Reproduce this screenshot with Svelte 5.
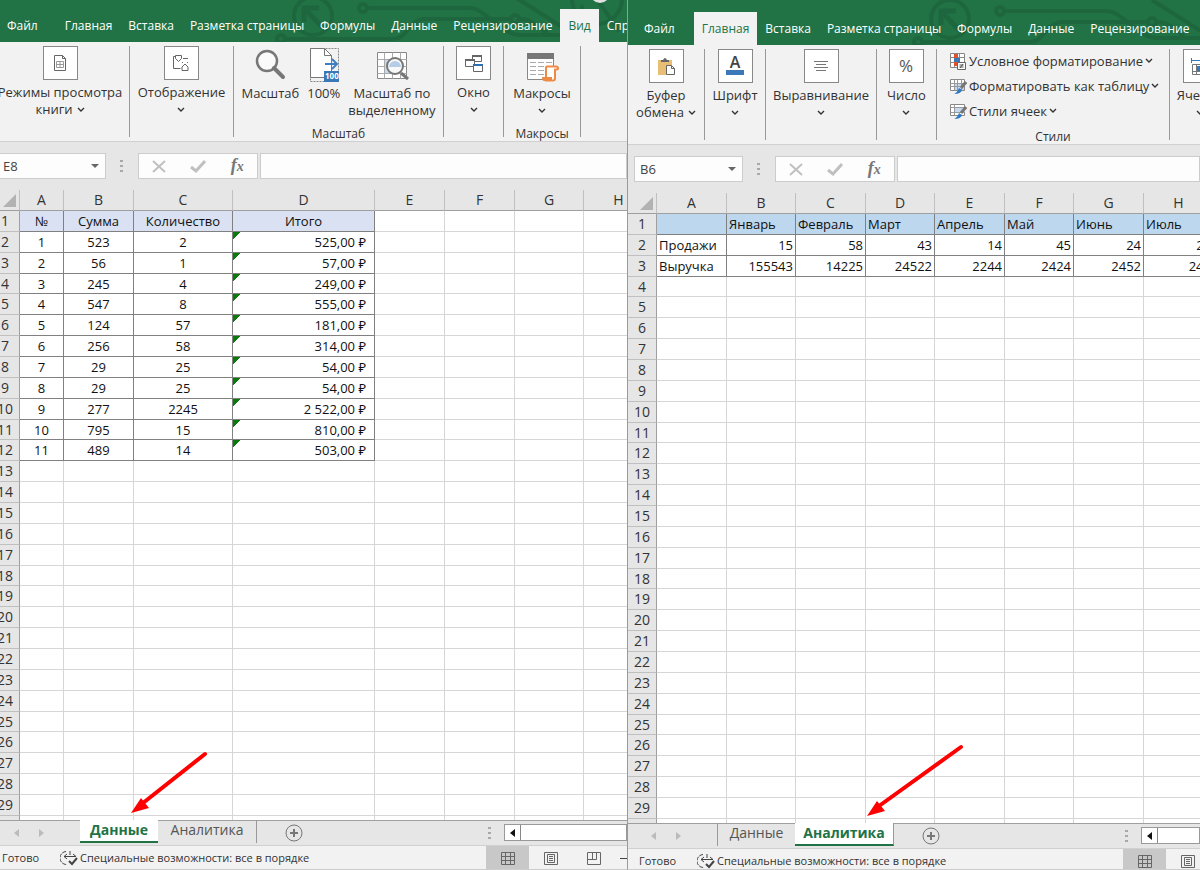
<script lang="ts">
  type Cell = string | number;

  const rowNumbers = Array.from({ length: 29 }, (_, i) => i + 1);

  const dataRows: Cell[][] = [
    ['№', 'Сумма', 'Количество', 'Итого'],
    [1, 523, 2, '525,00 ₽'],
    [2, 56, 1, '57,00 ₽'],
    [3, 245, 4, '249,00 ₽'],
    [4, 547, 8, '555,00 ₽'],
    [5, 124, 57, '181,00 ₽'],
    [6, 256, 58, '314,00 ₽'],
    [7, 29, 25, '54,00 ₽'],
    [8, 29, 25, '54,00 ₽'],
    [9, 277, 2245, '2 522,00 ₽'],
    [10, 795, 15, '810,00 ₽'],
    [11, 489, 14, '503,00 ₽'],
  ];

  const analyticsRows: Cell[][] = [
    ['', 'Январь', 'Февраль', 'Март', 'Апрель', 'Май', 'Июнь', 'Июль'],
    ['Продажи', 15, 58, 43, 14, 45, 24, 25],
    ['Выручка', 155543, 14225, 24522, 2244, 2424, 2452, 245],
  ];

  const books = [
    {
      id: 'data',
      active: 'Вид',
      cell: 'E8',
      sheet: 'Данные',
      rows: dataRows,
      columns: [44, 70, 99, 142, 70, 70, 69, 70],
      arrow: { left: 138, width: 82, height: 68 },
      groups: [
        { width: 139, items: [{ icon: 'views', boxed: true, lines: ['Режимы просмотра', 'книги'], menu: 'inline' }] },
        { width: 104, items: [{ icon: 'show', boxed: true, lines: ['Отображение'], menu: 'below' }] },
        {
          width: 210,
          title: 'Масштаб',
          items: [
            { icon: 'zoom', lines: ['Масштаб'] },
            { icon: 'hundred', lines: ['100%'] },
            { icon: 'zoomsel', lines: ['Масштаб по', 'выделенному'] },
          ],
        },
        { width: 60, items: [{ icon: 'window', boxed: true, lines: ['Окно'], menu: 'below' }] },
        { width: 77, title: 'Макросы', items: [{ icon: 'macros', lines: ['Макросы'], menu: 'below' }] },
      ],
    },
    {
      id: 'analytics',
      active: 'Главная',
      cell: 'B6',
      sheet: 'Аналитика',
      rows: analyticsRows,
      columns: [70, 69, 70, 69, 70, 69, 70, 70],
      arrow: { left: 237, width: 102, height: 78 },
      groups: [
        { width: 77, items: [{ icon: 'paste', boxed: true, lines: ['Буфер', 'обмена'], menu: 'inline' }] },
        { width: 61, items: [{ icon: 'font', boxed: true, lines: ['Шрифт'], menu: 'below' }] },
        { width: 111, items: [{ icon: 'align', boxed: true, lines: ['Выравнивание'], menu: 'below' }] },
        { width: 60, items: [{ icon: 'percent', boxed: true, lines: ['Число'], menu: 'below' }] },
        {
          width: 233,
          title: 'Стили',
          list: [
            { icon: 'cond', text: 'Условное форматирование' },
            { icon: 'astable', text: 'Форматировать как таблицу' },
            { icon: 'styles', text: 'Стили ячеек' },
          ],
        },
        { width: 61, items: [{ icon: 'cells', boxed: true, lines: ['Ячейки'], menu: 'below' }] },
      ],
    },
  ];

  const tabs = ['Файл', 'Главная', 'Вставка', 'Разметка страницы', 'Формулы', 'Данные', 'Рецензирование', 'Вид', 'Справка'];
  const letters = ['A', 'B', 'C', 'D', 'E', 'F', 'G', 'H'];
  const numbersWidth = 29;

  const tableWidth = (columns: number[]) => columns.reduce((sum, w) => sum + w, numbersWidth);
</script>

{#snippet chevron()}
  <svg class="chevron" width="8" height="6" viewBox="0 0 8 6"><path d="M1 1l3 3 3-3" fill="none" stroke="#333" stroke-width="1.4" /></svg>
{/snippet}

{#snippet circuit()}
  <svg class="circuit" width="640" height="45" viewBox="0 0 640 45" fill="none" stroke="#1e673e" stroke-width="4">
    <circle cx="322" cy="19" r="19" />
    <path d="M332 31L315 13M313 25V11h15" stroke-width="5" />
    <circle cx="372" cy="11" r="4" />
    <path d="M377 11h100q8 0 13 4l26 19q6 4 14 4h60" />
    <circle cx="524" cy="22" r="4" />
    <path d="M519 22h-84q-8 0-13 5l-10 11q-4 4-11 4H295" />
    <circle cx="290" cy="42" r="4" />
    <path d="M529 22q8 0 13 4l14 10M524 0l44 28q5 4 12 4" />
    <circle cx="606" cy="2" r="25" />
    <path d="M606 2l22 32M592 8l-12 28" />
    <circle cx="609" cy="-4" r="10" fill="#e0e0e0" stroke="none" />
  </svg>
{/snippet}

{#snippet icon(name: string)}
  {#if name === 'views'}
    <svg width="20" height="20" viewBox="0 0 20 20" fill="none" stroke="#666"><path d="M4.500 2.500h8l3 3v12h-11zM12.500 2.500v3h3" /><path d="M6.500 8.500h7v6h-7zM10 8.500v6M6.500 11.500h7" stroke="#999" /></svg>
  {:else if name === 'show'}
    <svg width="20" height="20" viewBox="0 0 20 20" fill="none" stroke="#666"><path d="M5 3.500H2.500v12h7M4.500 2.500h6v3l-3 3-3-3zM12 5.500h5" /><path d="M11 14l3-3 3 3v3.500h-6z" /><path d="M11 9.500h1m4 0h1" /></svg>
  {:else if name === 'zoom'}
    <svg width="36" height="36" viewBox="0 0 36 36" fill="none" stroke="#777"><circle cx="15" cy="14" r="10" fill="#fafafa" stroke-width="2.500" /><path d="M22 21l9 9" stroke-width="4" stroke-linecap="round" /></svg>
  {:else if name === 'hundred'}
    <svg width="32" height="36" viewBox="0 0 32 36" fill="none"><path d="M2.500 1.500h28v33h-28z" stroke="#888" stroke-dasharray="2 1" /><path d="M2.500 1.500h14l7 7v22h-21z" fill="#fff" stroke="#777" /><path d="M16.500 1.500v7h7" stroke="#777" /><path d="M17 17h12M24 12l5 5-5 5" stroke="#3f7fc1" stroke-width="2" /><rect x="16" y="24" width="15" height="11" fill="#3b78b8" /><text x="17" y="32" fill="#fff" font-size="8" font-weight="700">100</text></svg>
  {:else if name === 'zoomsel'}
    <svg width="36" height="36" viewBox="0 0 36 36" fill="none" stroke="#888"><path d="M3.500 5.500h29v26h-29z" fill="#fff" /><path d="M3.500 12.500h29M3.500 19.500h29M3.500 26.500h29M10.500 5.500v26M18.500 5.500v26M26.500 5.500v26" stroke="#aaa" /><path d="M11 13h15v13H11z" fill="#c5d9ef" stroke="none" /><circle cx="21" cy="19" r="8" fill="#f8f8f8" stroke="#777" stroke-width="2" /><path d="M15 20a6 6 0 0 1 12 0z" fill="#b5cde8" stroke="none" /><path d="M27 26l7 6" stroke="#777" stroke-width="3" /></svg>
  {:else if name === 'window'}
    <svg width="20" height="20" viewBox="0 0 20 20" fill="#fff" stroke="#666"><path d="M8.500 2.500h9v6h-9z" /><path d="M8 3h10" stroke-width="2" /><path d="M1.500 6.500h9v7h-9z" /><path d="M1 7h10" stroke-width="2" /><path d="M9.500 11.500h9v7h-9z" /><path d="M9 12h10" stroke="#2f6eb5" stroke-width="2" /></svg>
  {:else if name === 'macros'}
    <svg width="36" height="36" viewBox="0 0 36 36" fill="none"><path d="M3.500 6.500h26v26h-26z" fill="#fff" stroke="#888" /><path d="M3 6h27v6H3z" fill="#777" /><path d="M6 15.500h6m2 0h6m2 0h6M6 19.500h6m2 0h6M6 23.500h6m2 0h6M6 27.500h6m2 0h6" stroke="#aaa" /><path d="M22 20.500q0-1 1-1h9q2 0 2 2 0 1-1 1h-2v9q0 2-2 2h-7z" fill="#fff" stroke="#ed8b45" stroke-width="2" /><path d="M18 30h10v4H20q-2 0-2-4z" fill="#ed8b45" /></svg>
  {:else if name === 'paste'}
    <svg width="20" height="20" viewBox="0 0 20 20"><path d="M2 4h14v15H2z" fill="#e8bd74" /><path d="M5 6V4h2q2-4 4 0h2v2z" fill="#666" /><path d="M10.500 9.500h5l3 3v6h-8z" fill="#fff" stroke="#666" /><path d="M15.500 9.500v3h3" fill="none" stroke="#666" /></svg>
  {:else if name === 'font'}
    <svg width="20" height="20" viewBox="0 0 20 20"><text x="10" y="12" text-anchor="middle" font-size="16" font-weight="600" fill="#444">A</text><path d="M1 14h18v5H1z" fill="#3b78b8" /></svg>
  {:else if name === 'align'}
    <svg width="20" height="20" viewBox="0 0 20 20" stroke="#777"><path d="M3 5.500h14M5 8.500h10M3 11.500h14M5 14.500h10" /></svg>
  {:else if name === 'percent'}
    <svg width="20" height="20" viewBox="0 0 20 20"><text x="10" y="16" text-anchor="middle" font-size="17" fill="#555">%</text></svg>
  {:else if name === 'cells'}
    <svg width="20" height="20" viewBox="0 0 20 20" fill="none" stroke="#777"><path d="M1.500 2v5M18.500 2v5M2 4.500h16" stroke="#3b78b8" /><path d="M2.500 8.500h15v10h-15zM6.500 8.500v10M13.500 8.500v10M2.500 15.500h15" /><path d="M7 10h6v5H7z" fill="#3b78b8" stroke="none" /></svg>
  {:else if name === 'cond'}
    <svg width="18" height="18" viewBox="0 0 18 18" fill="none"><path d="M1.500 1.500h14v14h-14zM5.500 1.500v14M10.500 1.500v14M1.500 5.500h14M1.500 10.500h14" stroke="#888" fill="#fff" /><path d="M5 2h4v4H5zM5 10h4v4H5z" fill="#e0522e" /><path d="M5 6h6v4H5z" fill="#3b78b8" /><path d="M8.500 10.500h8v7h-8z" fill="#fff" stroke="#666" /><path d="M10.500 13h4M10.500 15h4M14 12l-3 4" stroke="#555" /></svg>
  {:else if name === 'astable' || name === 'styles'}
    <svg width="18" height="18" viewBox="0 0 18 18" fill="none"><path d="M1.500 2.500h14v11h-14z" fill="#fff" stroke="#888" />
      {#if name === 'astable'}
        <path d="M6 6h9v7H6z" fill="#c5d9ef" /><path d="M1.500 6.500h14M1.500 9.500h14M5.500 2.500v11M8.500 2.500v11M12.500 2.500v11" stroke="#999" />
      {:else}
        <path d="M5 5h11v5H5z" fill="#c5d9ef" /><path d="M1.500 5.500h14M1.500 10.500h14M5.500 2.500v11" stroke="#999" />
      {/if}
      <path d="M17 5l-5 6" stroke="#777" stroke-width="3" /><path d="M10 11l3 2q-1 4-8 4 3-1 5-6z" fill="#2f78c4" /></svg>
  {/if}
{/snippet}

<div class="desktop">
  {#each books as book (book.id)}
    <section class="pane {book.id}">
      <div class="workbook">
        <header class="titlebar">
          {@render circuit()}
          <nav>
            {#each tabs as tab}
              <button class="tab" class:file={tab === 'Файл'} class:active={tab === book.active}>{tab}</button>
            {/each}
          </nav>
        </header>

        <div class="ribbon">
          {#each book.groups as group}
            <div class="group" style:width="{group.width}px">
              {#if group.list}
                <div class="list">
                  {#each group.list as entry}
                    <button>{@render icon(entry.icon)}<span>{entry.text}</span>{@render chevron()}</button>
                  {/each}
                </div>
              {:else}
                <div class="items">
                  {#each group.items as item}
                    <button class="big">
                      <span class="picture" class:boxed={item.boxed}>{@render icon(item.icon)}</span>
                      {#each item.lines as line, i}
                        <span class="line">{line}{#if item.menu === 'inline' && i === item.lines.length - 1}{@render chevron()}{/if}</span>
                      {/each}
                      {#if item.menu === 'below'}<span class="line lone">{@render chevron()}</span>{/if}
                    </button>
                  {/each}
                </div>
              {/if}
              {#if group.title}<div class="title">{group.title}</div>{/if}
            </div>
          {/each}
        </div>

        <div class="formula">
          <div class="namebox">
            <input aria-label="Имя" value={book.cell} />
            <button aria-label="Список имён"><svg width="8" height="5" viewBox="0 0 8 5"><path d="M0 0h8L4 4z" fill="#666" /></svg></button>
          </div>
          <svg class="dots" width="4" height="16" viewBox="0 0 4 16" fill="#a8a8a8"><path d="M0 2h3v2H0zM0 7h3v2H0zM0 12h3v2H0z" /></svg>
          <div class="fx">
            <button aria-label="Отмена"><svg width="16" height="16" viewBox="0 0 16 16"><path d="M2 3l12 11M14 3L2 14" stroke="#c0c0c0" stroke-width="2" /></svg></button>
            <button aria-label="Ввод"><svg width="16" height="16" viewBox="0 0 16 16"><path d="M1 9l5 4 9-10" fill="none" stroke="#c0c0c0" stroke-width="3" /></svg></button>
            <button class="fn" aria-label="Вставить функцию">f<small>x</small></button>
          </div>
          <input class="entry" aria-label="Строка формул" />
        </div>

        <div class="sheet">
          <table style:width="{tableWidth(book.columns)}px">
            <colgroup>
              <col style:width="{numbersWidth}px" />
              {#each book.columns as width}<col style:width="{width}px" />{/each}
            </colgroup>
            <thead>
              <tr>
                <th class="corner"><svg width="13" height="13" viewBox="0 0 13 13"><path d="M13 0v13H0z" fill="#b2b2b2" /></svg></th>
                {#each letters as letter}<th>{letter}</th>{/each}
              </tr>
            </thead>
            <tbody>
              {#each rowNumbers as n}
                {@const row = book.rows[n - 1]}
                <tr>
                  <th>{n}</th>
                  {#each letters as _, c}
                    <td
                      class:filled={row && c < row.length}
                      class:head={n === 1 && row && c < row.length}
                      class:number={row && typeof row[c] === 'number'}
                      class:money={book.id === 'data' && row && c === 3 && n > 1}
                    >{row?.[c] ?? ''}</td>
                  {/each}
                </tr>
              {/each}
              <tr class="rest">
                <th></th>
                {#each letters as _}<td></td>{/each}
              </tr>
            </tbody>
          </table>
        </div>

        <div class="sheetbar">
          <div class="sheets">
            <div class="step">
              <button aria-label="Назад"><svg width="6" height="8" viewBox="0 0 6 8"><path d="M5 0v8L0 4z" fill="#bbb" /></svg></button>
              <button aria-label="Вперёд"><svg width="6" height="8" viewBox="0 0 6 8"><path d="M0 0v8l5-4z" fill="#bbb" /></svg></button>
            </div>
            {#each ['Данные', 'Аналитика'] as name}
              <button class="sheettab" class:long={name === 'Аналитика'} class:current={name === book.sheet}>{name}</button>
            {/each}
            <button class="add" aria-label="Новый лист">
              <svg width="18" height="18" viewBox="0 0 18 18" fill="none" stroke="#777"><circle cx="9" cy="9" r="8" /><path d="M9 5v8M5 9h8" stroke-width="2" /></svg>
            </button>
          </div>
          <svg class="dots" width="4" height="16" viewBox="0 0 4 16" fill="#a8a8a8"><path d="M0 2h3v2H0zM0 7h3v2H0zM0 12h3v2H0z" /></svg>
          <div class="scroll">
            <button aria-label="Прокрутить влево"><svg width="6" height="8" viewBox="0 0 6 8"><path d="M5 0v8L0 4z" fill="#111" /></svg></button>
          </div>
        </div>

        <footer class="status">
          <div class="messages">
            <span>Готово</span>
            <svg width="18" height="16" viewBox="0 0 18 16" fill="none" stroke="#444"><path d="M6 1.500A6.500 6.500 0 0 0 7 14.500" stroke-dasharray="4 1" /><path d="M4 6.500h12M7 4L4 6.500 7 9M13 4l3 2.500M10 1v4" /><path d="M9 11l3 3 5-6" stroke-width="2" /></svg>
            <span>Специальные возможности: все в порядке</span>
          </div>
          <button class="view on" aria-label="Обычный"><svg width="16" height="15" viewBox="0 0 16 15" fill="none" stroke="#666"><path d="M1.500 1.500h13v12h-13zM5.500 1.500v12M10.500 1.500v12M1.500 5.500h13M1.500 9.500h13" /></svg></button>
          <button class="view" aria-label="Разметка страницы"><svg width="16" height="15" viewBox="0 0 16 15" fill="none" stroke="#666"><path d="M1.500 1.500h13v12h-13zM4.500 3.500h7v8h-7zM6 5.500h4M6 7.500h4M6 9.500h4" /></svg></button>
          <button class="view" aria-label="Страничный режим"><svg width="16" height="15" viewBox="0 0 16 15" fill="none" stroke="#666"><path d="M1.500 1.500h13v12h-13zM6.500 1.500v7M10.500 1.500v7M1.500 8.500h9" /></svg></button>
          <button class="minus" aria-label="Уменьшить"><svg width="8" height="3" viewBox="0 0 8 3"><path d="M0 1.500h8" stroke="#444" /></svg></button>
        </footer>

        <svg class="arrow" style:left="{book.arrow.left}px" width={book.arrow.width} height={book.arrow.height}>
          <path d="M{book.arrow.width - 6} 4L14 {book.arrow.height - 15}" stroke="#f00" stroke-width="4" stroke-linecap="round" />
          <path d="M2 {book.arrow.height - 5}l10-15 8 10z" fill="#f00" />
        </svg>
      </div>
    </section>
  {/each}
</div>

<style>
  :global(body) {
    margin: 0;
  }

  * {
    box-sizing: border-box;
  }

  .desktop {
    display: grid;
    grid-template-columns: 628fr 572fr;
    height: 100vh;
    overflow: hidden;
    font-family: 'Open Sans', 'Noto Sans', sans-serif;
    font-size: 13px;
    color: #333;
    background: #e6e6e6;
  }

  .pane {
    overflow: hidden;
    min-width: 0;
    height: 100vh;
    border-bottom: 1px solid #ccc;
  }

  .pane.data {
    border-right: 1px solid #9a9a9a;
  }

  .workbook {
    position: relative;
    display: flex;
    flex-direction: column;
    height: calc(100vh + 3px);
  }

  /* the first window hangs over the screen edge */
  .data .workbook {
    margin: -3px 0 0 -9px;
  }

  button {
    flex: none;
    border: 0;
    padding: 0;
    background: none;
    font: inherit;
    color: inherit;
    white-space: nowrap;
  }

  input {
    border: 0;
    padding: 0;
    min-width: 0;
    font: inherit;
    color: #444;
    background: #fdfdfd;
    outline: 0;
  }

  svg {
    display: block;
    flex: none;
  }

  .titlebar {
    position: relative;
    flex: none;
    height: 45px;
    padding-top: 12px;
    background: #217346;
    overflow: hidden;
  }

  .circuit {
    position: absolute;
    top: 0;
    left: 0;
  }

  nav {
    position: relative;
    display: flex;
    height: 33px;
    font-size: 12px;
  }

  .tab {
    padding: 0 8px;
    color: #fff;
  }

  .tab.file {
    padding: 0 19px 0 16px;
  }

  .tab.active {
    background: #f2f2f2;
    color: #217346;
  }

  .ribbon {
    flex: none;
    display: flex;
    height: 100px;
    padding: 4px 0;
    background: #f2f2f2;
    border-bottom: 1px solid #d0d0d0;
  }

  .group {
    flex: none;
    display: flex;
    flex-direction: column;
    justify-content: space-between;
    border-right: 1px solid #999;
  }

  .items {
    display: flex;
    justify-content: center;
    gap: 8px;
  }

  .big {
    display: flex;
    flex-direction: column;
    align-items: center;
  }

  .picture {
    display: grid;
    place-items: center;
    height: 38px;
    margin-bottom: 1px;
  }

  .picture.boxed {
    width: 35px;
    height: 34px;
    margin-bottom: 4px;
    background: #fff;
    border: 1px solid #888;
  }

  .line {
    display: flex;
    align-items: center;
    gap: 4px;
    height: 17px;
    line-height: 17px;
  }

  .title {
    margin-bottom: -4px;
    text-align: center;
    font-size: 12px;
    line-height: 14px;
  }

  .list {
    display: flex;
    flex-direction: column;
    margin-top: -1px;
    padding-left: 12px;
  }

  .list button {
    display: flex;
    align-items: center;
    gap: 2px;
    height: 25px;
  }

  .formula {
    flex: none;
    display: flex;
    height: 48px;
    padding: 11px 0 11px 6px;
    background: #e6e6e6;
  }

  .namebox {
    display: flex;
    width: 109px;
    border: 1px solid #ccc;
    background: #fdfdfd;
  }

  .namebox input {
    flex: 1;
    padding-left: 5px;
  }

  .namebox button {
    display: grid;
    place-items: center;
    width: 20px;
  }

  .formula .dots {
    margin: 5px 14px;
  }

  .fx {
    display: flex;
    width: 120px;
    border: 1px solid #ccc;
    background: #fdfdfd;
  }

  .fx button {
    flex: 1;
    display: grid;
    place-items: center;
  }

  .fx .fn {
    display: block;
    font: italic 700 18px/22px 'Liberation Serif', serif;
    color: #777;
  }

  .fn small {
    font-size: 14px;
  }

  .entry {
    flex: 1;
    margin-left: 2px;
    border: 1px solid #ccc;
  }

  .sheet {
    flex: 1;
    min-height: 0;
    overflow: hidden;
    background: #fff;
  }

  table {
    height: 100%;
    table-layout: fixed;
    border-collapse: separate;
    border-spacing: 0;
    line-height: 18px;
    color: #111;
  }

  th,
  td {
    padding: 0;
    white-space: nowrap;
    border-right: 1px solid #d6d6d6;
    border-bottom: 1px solid #d6d6d6;
  }

  th {
    font-size: 14px;
    font-weight: 400;
    color: #333;
    background: #e6e6e6;
    border-right-color: #9f9f9f;
    border-bottom-color: #c0c0c0;
  }

  thead th {
    height: 21px;
    border-right-color: #c0c0c0;
    border-bottom-color: #9f9f9f;
  }

  .corner svg {
    margin-left: auto;
    margin-right: 3px;
  }

  .filled {
    border-color: #808080;
  }

  .data .filled {
    text-align: center;
  }

  .analytics .filled {
    padding: 0 2px;
  }

  .analytics .number {
    text-align: right;
  }

  .head {
    background: #d9e1f2;
  }

  .analytics .head {
    background: #bdd7ee;
  }

  .data .money {
    padding-right: 8px;
    text-align: right;
    background: linear-gradient(135deg, #0a7a0a 5px, transparent 5px);
  }

  .rest th,
  .rest td {
    height: 4px;
    border-bottom: 0;
  }

  .sheetbar {
    flex: none;
    display: flex;
    height: 26px;
    background: #e6e6e6;
    border-top: 1px solid #9f9f9f;
    border-bottom: 1px solid #d0d0d0;
  }

  .sheets {
    flex: none;
    display: flex;
    width: 497px;
    height: 23px;
    margin-top: -1px;
  }

  .step {
    display: flex;
    align-items: center;
    gap: 19px;
    width: 89px;
    padding: 3px 0 0 23px;
  }

  .sheettab {
    width: 78px;
    padding-bottom: 3px;
    font-size: 14px;
    line-height: 20px;
    color: #555;
  }

  .sheettab.long {
    width: 99px;
    border-right: 1px solid #999;
  }

  .sheettab.current {
    padding-bottom: 1px;
    font-weight: 700;
    color: #217346;
    background: #fff;
    border-bottom: 2px solid #217346;
  }

  .analytics .sheettab:not(.current) {
    border-left: 1px solid #999;
  }

  .add {
    height: 18px;
    margin: 4px 0 0 28px;
  }

  .sheetbar .dots {
    margin-top: 4px;
  }

  .scroll {
    flex: 1;
    height: 17px;
    margin: 3px 0 0 12px;
    border: 1px solid #999;
    background: #fff;
  }

  .scroll button {
    display: grid;
    place-items: center;
    width: 16px;
    height: 15px;
    border-right: 1px solid #888;
  }

  .status {
    flex: none;
    display: flex;
    height: 24px;
    font-size: 11px;
    background: #f2f2f2;
  }

  .messages {
    flex: none;
    display: flex;
    align-items: center;
    width: 495px;
    padding: 0 0 1px 11px;
    white-space: nowrap;
  }

  .messages svg {
    margin: 0 2px 0 21px;
  }

  .view {
    display: grid;
    place-items: center;
    width: 43px;
  }

  .view.on {
    background: #c8c8c8;
  }

  .minus {
    padding-left: 5px;
  }

  .arrow {
    position: absolute;
    bottom: 52px;
  }
</style>
